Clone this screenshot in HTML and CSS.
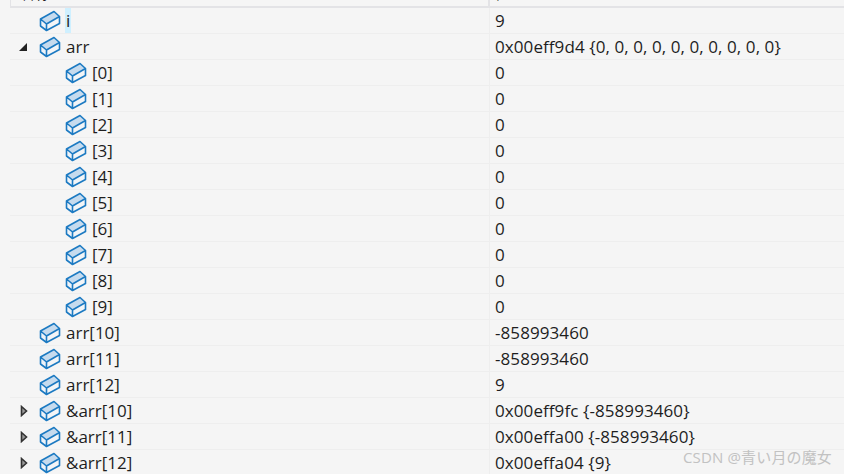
FILE: index.html
```html
<!DOCTYPE html>
<html lang="en">
<head>
    <meta charset="UTF-8">
    <title>Watch</title>
    <link rel="stylesheet" href="styles.css">
</head>
<body>
    <svg class="defs" width="0" height="0">
        <symbol id="cube" viewBox="0 0 22 22">
            <path d="M1.5 9 L15 1.5 L20.5 6.5 L7.5 14 Z" fill="#c6dbee"/>
            <path d="M1.5 9 L7.5 14 L7.5 20.5 L1.5 16 Z" fill="#eef3f8"/>
            <path d="M7.5 14 L20.5 6.5 L20.5 13.5 L7.5 20.5 Z" fill="#f3f5f7"/>
            <path d="M1.5 9 L15 1.5 L20.5 6.5 L20.5 13.5 L7.5 20.5 L1.5 16 Z M1.5 9 L7.5 14 L20.5 6.5 M7.5 14 L7.5 20.5" fill="none" stroke="#1c7ac2" stroke-width="1.6" stroke-linejoin="round"/>
        </symbol>
        <symbol id="closed" viewBox="0 0 8 12">
            <path d="M1.5 1.5 L6.5 6 L1.5 10.5 Z" fill="#9a9a9a" stroke="#333" stroke-width="1.6"/>
        </symbol>
    </svg>

    <div class="watch">
        <div class="header">
            <div class="col-name"><span class="head-text">名称</span></div>
            <div class="col-value"><span class="head-text value-head">值</span></div>
        </div>

        <div class="row">
            <div class="col-name"><span class="arrow"></span><svg class="cube"><use href="#cube"/></svg><span class="name selected">i</span></div>
            <div class="col-value">9</div>
        </div>
        <div class="row">
            <div class="col-name"><span class="arrow open"></span><svg class="cube"><use href="#cube"/></svg><span class="name">arr</span></div>
            <div class="col-value">0x00eff9d4 {0, 0, 0, 0, 0, 0, 0, 0, 0, 0}</div>
        </div>
        <div class="row child">
            <div class="col-name"><span class="arrow"></span><svg class="cube"><use href="#cube"/></svg><span class="name">[0]</span></div>
            <div class="col-value">0</div>
        </div>
        <div class="row child">
            <div class="col-name"><span class="arrow"></span><svg class="cube"><use href="#cube"/></svg><span class="name">[1]</span></div>
            <div class="col-value">0</div>
        </div>
        <div class="row child">
            <div class="col-name"><span class="arrow"></span><svg class="cube"><use href="#cube"/></svg><span class="name">[2]</span></div>
            <div class="col-value">0</div>
        </div>
        <div class="row child">
            <div class="col-name"><span class="arrow"></span><svg class="cube"><use href="#cube"/></svg><span class="name">[3]</span></div>
            <div class="col-value">0</div>
        </div>
        <div class="row child">
            <div class="col-name"><span class="arrow"></span><svg class="cube"><use href="#cube"/></svg><span class="name">[4]</span></div>
            <div class="col-value">0</div>
        </div>
        <div class="row child">
            <div class="col-name"><span class="arrow"></span><svg class="cube"><use href="#cube"/></svg><span class="name">[5]</span></div>
            <div class="col-value">0</div>
        </div>
        <div class="row child">
            <div class="col-name"><span class="arrow"></span><svg class="cube"><use href="#cube"/></svg><span class="name">[6]</span></div>
            <div class="col-value">0</div>
        </div>
        <div class="row child">
            <div class="col-name"><span class="arrow"></span><svg class="cube"><use href="#cube"/></svg><span class="name">[7]</span></div>
            <div class="col-value">0</div>
        </div>
        <div class="row child">
            <div class="col-name"><span class="arrow"></span><svg class="cube"><use href="#cube"/></svg><span class="name">[8]</span></div>
            <div class="col-value">0</div>
        </div>
        <div class="row child">
            <div class="col-name"><span class="arrow"></span><svg class="cube"><use href="#cube"/></svg><span class="name">[9]</span></div>
            <div class="col-value">0</div>
        </div>
        <div class="row">
            <div class="col-name"><span class="arrow"></span><svg class="cube"><use href="#cube"/></svg><span class="name">arr[10]</span></div>
            <div class="col-value">-858993460</div>
        </div>
        <div class="row">
            <div class="col-name"><span class="arrow"></span><svg class="cube"><use href="#cube"/></svg><span class="name">arr[11]</span></div>
            <div class="col-value">-858993460</div>
        </div>
        <div class="row">
            <div class="col-name"><span class="arrow"></span><svg class="cube"><use href="#cube"/></svg><span class="name">arr[12]</span></div>
            <div class="col-value">9</div>
        </div>
        <div class="row">
            <div class="col-name"><svg class="arrow closed"><use href="#closed"/></svg><svg class="cube"><use href="#cube"/></svg><span class="name">&amp;arr[10]</span></div>
            <div class="col-value">0x00eff9fc {-858993460}</div>
        </div>
        <div class="row">
            <div class="col-name"><svg class="arrow closed"><use href="#closed"/></svg><svg class="cube"><use href="#cube"/></svg><span class="name">&amp;arr[11]</span></div>
            <div class="col-value">0x00effa00 {-858993460}</div>
        </div>
        <div class="row">
            <div class="col-name"><svg class="arrow closed"><use href="#closed"/></svg><svg class="cube"><use href="#cube"/></svg><span class="name">&amp;arr[12]</span></div>
            <div class="col-value">0x00effa04 {9}</div>
        </div>
    </div>

    <div class="mark">CSDN @青い月の魔女</div>
</body>
</html>
```

FILE: styles.css
```css
* {
    margin: 0;
    padding: 0;
    box-sizing: border-box;
}
html, body {
    height: 100%;
    overflow: hidden;
}
body {
    background-color: #f5f5f5;
    color: #1e1e1e;
    font-family: "Open Sans", "Noto Sans CJK SC", sans-serif;
    font-size: 17px;
}
.defs {
    display: block;
    height: 0;
}
.watch {
    margin-left: 10px;
}
.header {
    display: flex;
    height: 8px;
    overflow: hidden;
    border-bottom: 2px solid #e3e3e6;
}
.header .col-name {
    display: block;
    border-left: 1px solid #e3e3e6;
    border-right: 2px solid #e3e3e6;
}
.head-text {
    display: block;
    margin-top: -17px;
    padding-left: 9px;
    font-size: 15px;
    line-height: 20px;
}
.value-head {
    padding-left: 0;
}
.row {
    display: flex;
    height: 26px;
    border-bottom: 1px solid #eeeeee;
    line-height: 25px;
}
.col-name {
    display: flex;
    align-items: center;
    width: 480px;
    flex-shrink: 0;
    border-right: 1px solid #eeeeee;
}
.col-value {
    padding-left: 5px;
    letter-spacing: 0.08px;
    white-space: nowrap;
}
.arrow {
    display: block;
    width: 9px;
    height: 9px;
    margin-left: 9px;
    margin-right: 11px;
    flex-shrink: 0;
}
.arrow.open {
    border-style: solid;
    border-width: 0 0 8px 8px;
    border-color: transparent transparent #222 transparent;
    width: 8px;
    height: 8px;
    margin-right: 12px;
}
.arrow.closed {
    width: 8px;
    height: 12px;
    margin-left: 10px;
    margin-right: 11px;
}
.child .arrow {
    margin-left: 35px;
}
.cube {
    width: 22px;
    height: 22px;
    flex-shrink: 0;
    margin-right: 5px;
}
.name {
    display: block;
}
.selected {
    background-color: #cff0ff;
    padding: 0 1px;
    margin-left: -1px;
    height: 25px;
}
.mark {
    position: absolute;
    right: 12px;
    bottom: 7px;
    color: #c2c2c2;
    font-size: 15px;
    letter-spacing: 0.15px;
    white-space: nowrap;
}
```
